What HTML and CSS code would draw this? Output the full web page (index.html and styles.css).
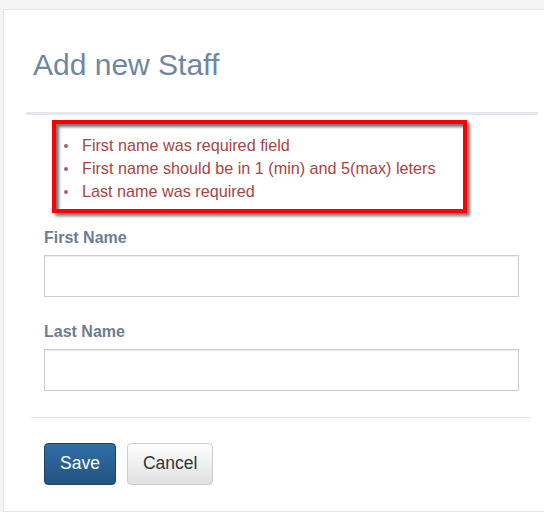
FILE: index.html
```html
<!DOCTYPE html>
<html lang="en">
<head>
<meta charset="utf-8">
<title>Add new Staff</title>
<link rel="stylesheet" href="styles.css">
</head>
<body>
<div class="card">
  <div class="card-header">
    <h2 class="title">Add new Staff</h2>
  </div>
  <form class="form">
    <ul class="errors">
      <li>First name was required field</li>
      <li>First name should be in 1 (min) and 5(max) leters</li>
      <li>Last name was required</li>
    </ul>
    <div class="form-group first">
      <label class="label" for="fn">First Name</label>
      <input class="input" id="fn" type="text">
    </div>
    <div class="form-group">
      <label class="label" for="ln">Last Name</label>
      <input class="input" id="ln" type="text">
    </div>
  </form>
  <div class="divider"></div>
  <div class="actions">
    <button class="btn btn-primary" type="button">Save</button>
    <button class="btn btn-default" type="button">Cancel</button>
  </div>
</div>
</body>
</html>
```
FILE: styles.css
```css
html, body {
  margin: 0;
  padding: 0;
  overflow: hidden;
  background: #f5f5f5;
  font-family: "Liberation Sans", Arial, sans-serif;
}

.card {
  margin: 9px 0 0 3px;
  background: #fff;
  border: 1px solid #e6e6e6;
  border-right: none;
  padding: 0 0 26px 0;
}

.card-header {
  margin: 0 6px 0 22px;
  padding-top: 38px;
  border-bottom: 3px solid #e3e8ef;
  padding-bottom: 31px;
}

.title {
  margin: 0;
  padding-left: 7px;
  font-size: 30px;
  line-height: 33px;
  font-weight: normal;
  color: #6f86a2;
}

.form {
  margin: 5px 0 0 0;
  padding-left: 40px;
}

.errors {
  list-style: none;
  margin: 0 0 0 8px;
  padding: 10px 0 6px 8px;
  width: 399px;
  border: 4px solid #ff0000;
  box-shadow: 3px 3px 3px rgba(0, 0, 0, 0.55), inset 3px 3px 3px rgba(0, 0, 0, 0.55);
  font-size: 16.2px;
  line-height: 23px;
  color: #a94442;
}

.errors li {
  display: flex;
  align-items: center;
}

.errors li::before {
  content: "";
  width: 4px;
  height: 4px;
  border-radius: 50%;
  background: #b25a58;
  margin-right: 14px;
  flex: none;
}

.form-group {
  margin-top: 25px;
  display: flex;
  flex-direction: column;
  width: 475px;
}

.form-group.first {
  margin-top: 15px;
}

.label {
  font-size: 16px;
  line-height: 20px;
  font-weight: bold;
  color: #6c7d94;
  margin-bottom: 7px;
}

.input {
  box-sizing: border-box;
  height: 42px;
  width: 475px;
  margin: 0;
  border: 1px solid #cccccc;
  border-radius: 0;
  box-shadow: inset 0 1px 1px rgba(0, 0, 0, 0.075);
  background: #fff;
  font-family: inherit;
  font-size: 16px;
}

.divider {
  margin: 26px 13px 0 27px;
  height: 1px;
  background: #e5e5e5;
}

.actions {
  margin-top: 25px;
  padding-left: 40px;
  display: flex;
  gap: 11px;
}

.btn {
  box-sizing: border-box;
  height: 42px;
  padding: 0 15px;
  border-radius: 4px;
  font-family: inherit;
  font-size: 17.5px;
  line-height: 1;
  cursor: pointer;
}

.btn-primary {
  color: #fff;
  background: linear-gradient(to bottom, #2f6ea6 0%, #23537f 100%);
  border: 1px solid #1d4266;
}

.btn-default {
  color: #333;
  background: linear-gradient(to bottom, #ffffff 0%, #e0e0e0 100%);
  border: 1px solid #cccccc;
}
```
